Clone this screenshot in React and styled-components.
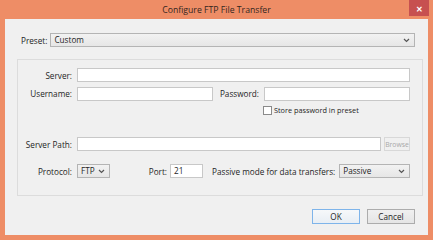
import React from "react";
import styled, { createGlobalStyle } from "styled-components";

const Global = createGlobalStyle`
  html, body { margin: 0; padding: 0; background: #ee8d66; }
  body { font-family: "Open Sans", "Noto Sans", sans-serif; }
  * { box-sizing: border-box; }
`;

const Window = styled.div`
  width: 433px;
  height: 240px;
  background: #ee8d66;
  display: flex;
  flex-direction: column;
`;

const TitleBar = styled.div`
  height: 19px;
  display: grid;
  grid-template-columns: 1fr auto 1fr;
  align-items: start;
`;

const Title = styled.div`
  grid-column: 2;
  font-size: 8.7px;
  line-height: 20px;
  color: #33261f;
`;

const CloseButton = styled.div`
  grid-column: 3;
  justify-self: end;
  margin-right: 4px;
  width: 20px;
  height: 16px;
  background: #c75050;
  color: #fff;
  font-size: 8px;
  font-weight: 700;
  display: flex;
  align-items: center;
  justify-content: center;
`;

const Client = styled.div`
  flex: 1;
  margin: 0 5px 5px 5px;
  background: #f0f0f0;
  display: flex;
  flex-direction: column;
  padding: 14px 13px 0 16px;
`;

const Row = styled.div`
  display: flex;
  align-items: center;
  margin-top: ${(p) => p.$mt || 0}px;
  height: ${(p) => p.$h || 14}px;
`;

const Label = styled.span`
  font-size: 8.2px;
  color: #1e1e1e;
  white-space: nowrap;
  text-align: ${(p) => (p.$w ? "right" : "left")};
  width: ${(p) => (p.$w ? `${p.$w}px` : "auto")};
  margin-right: ${(p) => (p.$gap ?? 4)}px;
  margin-left: ${(p) => p.$ml || 0}px;
`;

const Input = styled.div`
  height: 14px;
  width: ${(p) => (p.$w ? `${p.$w}px` : "auto")};
  flex: ${(p) => (p.$w ? "none" : "1")};
  background: #fff;
  border: 1px solid #c8c8c8;
  font-size: 8.2px;
  line-height: 12px;
  padding-left: 3px;
  color: #1e1e1e;
`;

const Select = styled.div`
  height: 14px;
  width: ${(p) => (p.$w ? `${p.$w}px` : "auto")};
  flex: ${(p) => (p.$w ? "none" : "1")};
  background: linear-gradient(#f2f2f2, #e6e6e6);
  border: 1px solid #b4b4b4;
  font-size: 8.2px;
  line-height: 12px;
  padding: 0 4px 0 3px;
  color: #1e1e1e;
  display: flex;
  align-items: center;
  justify-content: space-between;
`;

const Chevron = () => (
  <svg width="7" height="5" viewBox="0 0 7 5">
    <path d="M1 1 L3.5 3.5 L6 1" stroke="#555" strokeWidth="1.2" fill="none" />
  </svg>
);

const GroupBox = styled.div`
  margin: 12px -8px 0 -4px;
  height: 137px;
  border: 1px solid #dcdcdc;
  padding: 8px 12px 0 2px;
  display: flex;
  flex-direction: column;
`;

const CheckRow = styled.label`
  display: flex;
  align-items: center;
  margin-top: 5px;
  margin-left: 243px;
  font-size: 7.3px;
  color: #1e1e1e;
  gap: 2px;
`;

const Box = styled.span`
  width: 9px;
  height: 9px;
  border: 1px solid #8a8a8a;
  background: #fff;
`;

const SmallButton = styled.div`
  width: 26px;
  height: 14px;
  margin-left: 3px;
  border: 1px solid #d8d8d8;
  background: #f0f0f0;
  color: #a8a8a8;
  font-size: 6.8px;
  display: flex;
  align-items: center;
  justify-content: center;
`;

const ButtonRow = styled.div`
  display: flex;
  justify-content: flex-end;
  gap: 7px;
  margin-top: 13px;
`;

const Button = styled.div`
  width: 48px;
  height: 15px;
  border: 1px solid ${(p) => (p.$default ? "#7eb4ea" : "#acacac")};
  background: ${(p) =>
    p.$default ? "linear-gradient(#f6f8fa, #e8eef4)" : "linear-gradient(#f0f0f0, #e5e5e5)"};
  font-size: 8.2px;
  color: #1e1e1e;
  display: flex;
  align-items: center;
  justify-content: center;
`;

export default function App() {
  return (
    <>
      <Global />
      <Window>
        <TitleBar>
          <Title>Configure FTP File Transfer</Title>
          <CloseButton>✕</CloseButton>
        </TitleBar>
        <Client>
          <Row>
            <Label $gap={3}>Preset:</Label>
            <Select>
              <span>Custom</span>
              <Chevron />
            </Select>
          </Row>
          <GroupBox>
            <Row>
              <Label $w={52} $gap={5}>Server:</Label>
              <Input />
            </Row>
            <Row $mt={5} $h={13}>
              <Label $w={52} $gap={5}>Username:</Label>
              <Input $w={136} />
              <Label $w={46} $gap={5}>Password:</Label>
              <Input />
            </Row>
            <CheckRow>
              <Box />
              <span>Store password in preset</span>
            </CheckRow>
            <Row $mt={22}>
              <Label $w={52} $gap={5}>Server Path:</Label>
              <Input />
              <SmallButton>Browse</SmallButton>
            </Row>
            <Row $mt={13}>
              <Label $w={52} $gap={5}>Protocol:</Label>
              <Select $w={33}>
                <span>FTP</span>
                <Chevron />
              </Select>
              <Label $w={57} $gap={3}>Port:</Label>
              <Input $w={33}>21</Input>
              <Label $ml={9} $gap={4}>Passive mode for data transfers:</Label>
              <Select>
                <span>Passive</span>
                <Chevron />
              </Select>
            </Row>
          </GroupBox>
          <ButtonRow>
            <Button $default>OK</Button>
            <Button>Cancel</Button>
          </ButtonRow>
        </Client>
      </Window>
    </>
  );
}
